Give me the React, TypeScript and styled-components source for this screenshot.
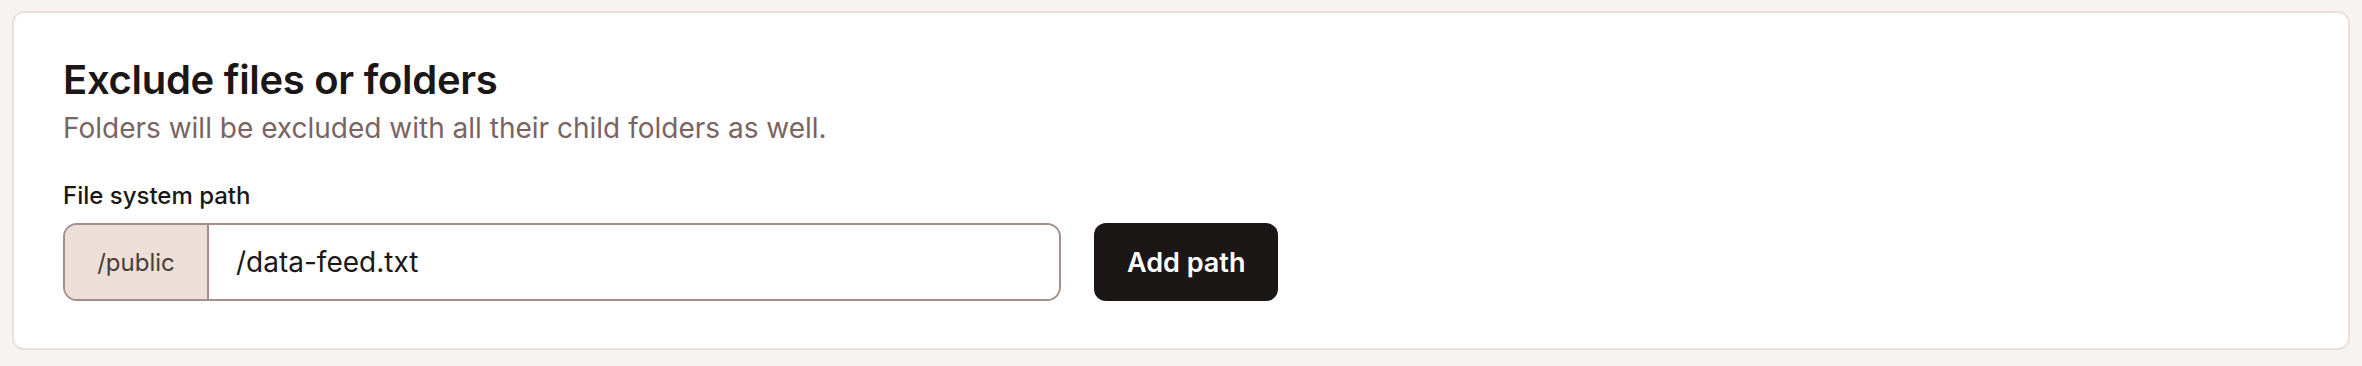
import React from "react";
import styled, { createGlobalStyle } from "styled-components";

const Global = createGlobalStyle`
  html, body { margin: 0; padding: 0; background: #f7f3f0; }
  body { font-family: Inter, "Noto Sans", sans-serif; }
  * { box-sizing: border-box; }
`;

const Page = styled.div`
  padding: 11px 12px;
`;

const Card = styled.section`
  background: #ffffff;
  border: 2px solid #ebe0da;
  border-radius: 12px;
  padding: 47px 48px 47px 49px;
  display: flex;
  flex-direction: column;
`;

const Title = styled.h2`
  margin: 0;
  font-size: 40px;
  line-height: 40px;
  font-weight: 600;
  color: #1c1717;
  letter-spacing: -0.3px;
`;

const Subtitle = styled.p`
  margin: 7px 0 0;
  font-size: 28px;
  line-height: 42px;
  color: #7a6462;
`;

const Label = styled.label`
  margin-top: 29px;
  font-size: 24px;
  line-height: 36px;
  font-weight: 500;
  color: #1c1717;
`;

const Row = styled.div`
  margin-top: 9px;
  display: flex;
  align-items: stretch;
  gap: 33px;
`;

const InputGroup = styled.div`
  width: 998px;
  height: 78px;
  display: flex;
  border: 2px solid #a48f8a;
  border-radius: 14px;
  overflow: hidden;
`;

const Addon = styled.span`
  width: 144px;
  flex: none;
  display: flex;
  align-items: center;
  justify-content: center;
  background: #ebdfd8;
  border-right: 2px solid #a48f8a;
  font-size: 24px;
  color: #4a3c3a;
`;

const Field = styled.input`
  flex: 1;
  border: none;
  outline: none;
  padding: 0 27px;
  font-family: inherit;
  font-size: 28px;
  color: #1c1717;
  background: #ffffff;
`;

const Button = styled.button`
  height: 78px;
  padding: 0 33px;
  border: none;
  border-radius: 12px;
  background: #1c1717;
  color: #ffffff;
  font-family: inherit;
  font-size: 27px;
  font-weight: 600;
  cursor: pointer;
`;

export default function App() {
  return (
    <>
      <Global />
      <Page>
        <Card>
          <Title>Exclude files or folders</Title>
          <Subtitle>Folders will be excluded with all their child folders as well.</Subtitle>
          <Label htmlFor="path">File system path</Label>
          <Row>
            <InputGroup>
              <Addon>/public</Addon>
              <Field id="path" defaultValue="/data-feed.txt" />
            </InputGroup>
            <Button>Add path</Button>
          </Row>
        </Card>
      </Page>
    </>
  );
}
